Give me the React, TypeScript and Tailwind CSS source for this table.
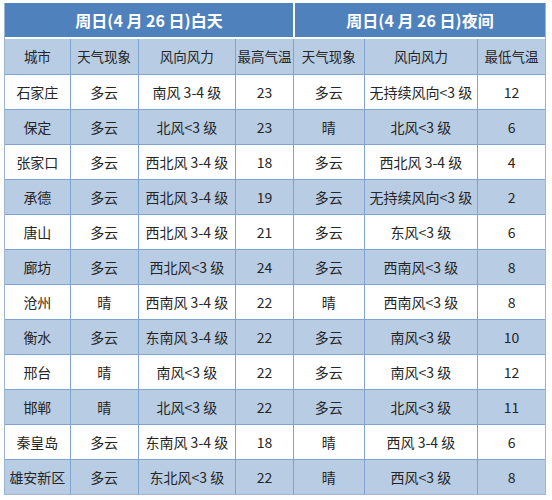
import React from 'react';

const cols = ['w-[66px]', 'w-[68px]', 'w-[98px]', 'w-[58px]', 'w-[71px]', 'w-[114px]', 'w-[67px]'];

const head = ['城市', '天气现象', '风向风力', '最高气温', '天气现象', '风向风力', '最低气温'];

const rows: string[][] = [
  ['石家庄', '多云', '南风 3-4 级', '23', '多云', '无持续风向<3 级', '12'],
  ['保定', '多云', '北风<3 级', '23', '晴', '北风<3 级', '6'],
  ['张家口', '多云', '西北风 3-4 级', '18', '多云', '西北风 3-4 级', '4'],
  ['承德', '多云', '西北风 3-4 级', '19', '多云', '无持续风向<3 级', '2'],
  ['唐山', '多云', '西北风 3-4 级', '21', '多云', '东风<3 级', '6'],
  ['廊坊', '多云', '西北风<3 级', '24', '多云', '西南风<3 级', '8'],
  ['沧州', '晴', '西南风 3-4 级', '22', '晴', '西南风<3 级', '8'],
  ['衡水', '多云', '东南风 3-4 级', '22', '多云', '南风<3 级', '10'],
  ['邢台', '晴', '南风<3 级', '22', '多云', '南风<3 级', '12'],
  ['邯郸', '晴', '北风<3 级', '22', '多云', '北风<3 级', '11'],
  ['秦皇岛', '多云', '东南风 3-4 级', '18', '晴', '西风 3-4 级', '6'],
  ['雄安新区', '多云', '东北风<3 级', '22', '晴', '西风<3 级', '8'],
];

export default function App() {
  return (
    <div
      className="w-[552px] h-[500px] bg-white pt-[3px] pl-[4px]"
      style={{ fontFamily: '"Microsoft YaHei", "Noto Sans CJK SC", "Noto Sans", sans-serif' }}
    >
      <div className="w-[542px] border-l border-r border-b border-[#9db5d3]">
        <div className="flex h-[36px] border-b-2 border-white bg-[#4f81bd] text-white font-bold text-[16px]">
          <div className="w-[290px] flex items-center justify-center border-r-2 border-white">周日(4 月 26 日)白天</div>
          <div className="flex-1 flex items-center justify-center">周日(4 月 26 日)夜间</div>
        </div>
        <div className="flex h-[35px] bg-[#b8cce4] text-[13.5px] text-[#262626]">
          {head.map((h, i) => (
            <div
              key={i}
              className={`${cols[i]} flex items-center justify-center whitespace-nowrap ${i < 6 ? 'border-r border-[#7fa2d0]' : ''}`}
            >
              {h}
            </div>
          ))}
        </div>
        {rows.map((r, ri) => (
          <div
            key={ri}
            className={`flex h-[35px] border-t border-[#7fa2d0] text-[14px] text-[#262626] ${ri % 2 === 1 ? 'bg-[#b8cce4]' : 'bg-white'}`}
          >
            {r.map((c, i) => (
              <div
                key={i}
                className={`${cols[i]} flex items-center justify-center whitespace-nowrap ${i < 6 ? 'border-r border-[#7fa2d0]' : ''}`}
              >
                {c}
              </div>
            ))}
          </div>
        ))}
      </div>
    </div>
  );
}
